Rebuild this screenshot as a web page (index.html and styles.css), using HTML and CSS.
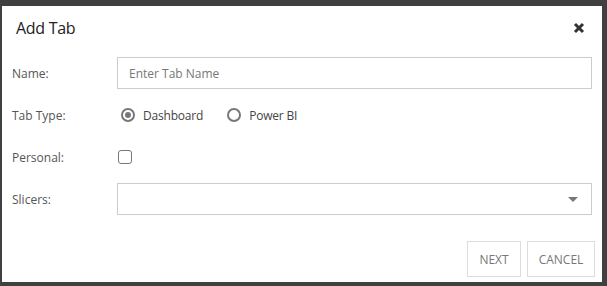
FILE: index.html
```html
<!DOCTYPE html>
<html>
<head>
<meta charset="utf-8">
<link rel="stylesheet" href="styles.css">
</head>
<body>
<div class="dialog">
  <div class="header">
    <span class="title">Add Tab</span>
    <svg class="close" width="12" height="12" viewBox="0 0 12 12"><path d="M2 2 L10 10 M10 2 L2 10" stroke="#333" stroke-width="3" stroke-linecap="butt"/></svg>
  </div>
  <div class="form">
    <div class="row">
      <label class="label">Name:</label>
      <div class="input"><span class="placeholder">Enter Tab Name</span></div>
    </div>
    <div class="row">
      <label class="label">Tab Type:</label>
      <div class="radios">
        <span class="radio-item"><span class="radio checked"></span>Dashboard</span>
        <span class="radio-item"><span class="radio"></span>Power BI</span>
      </div>
    </div>
    <div class="row">
      <label class="label">Personal:</label>
      <span class="checkbox"></span>
    </div>
    <div class="row">
      <label class="label">Slicers:</label>
      <div class="input select"><span class="caret"></span></div>
    </div>
  </div>
  <div class="footer">
    <button class="btn next">NEXT</button>
    <button class="btn">CANCEL</button>
  </div>
</div>
</body>
</html>
```
FILE: styles.css
```css
html, body {
  margin: 0;
  padding: 0;
  background: #404040;
  width: 607px;
  height: 286px;
  overflow: hidden;
}
body {
  padding: 6px 0 0 2px;
  box-sizing: border-box;
  font-family: "Open Sans", "Noto Sans", sans-serif;
}
.dialog {
  width: 600px;
  height: 276px;
  background: #fff;
  box-sizing: border-box;
  display: flex;
  flex-direction: column;
}
.header {
  height: 44px;
  display: flex;
  align-items: center;
  justify-content: space-between;
  padding: 0 17px 0 14px;
}
.title {
  font-size: 16px;
  color: #222;
  letter-spacing: -0.3px;
}
.close {
  display: block;
}
.form {
  padding: 2px 10px 0 10px;
  display: flex;
  flex-direction: column;
}
.row {
  display: flex;
  align-items: center;
  height: 42px;
}
.label {
  width: 105px;
  font-size: 12px;
  color: #555;
}
.input {
  width: 475px;
  height: 32px;
  box-sizing: border-box;
  border: 1px solid #ccc;
  display: flex;
  align-items: center;
  padding-left: 11px;
}
.placeholder {
  font-size: 12px;
  color: #777;
}
.radios {
  display: flex;
  align-items: center;
  font-size: 12px;
  color: #444;
  letter-spacing: -0.2px;
}
.radio-item {
  display: flex;
  align-items: center;
  margin-left: 4px;
  margin-right: 20px;
}
.radio {
  width: 14px;
  height: 14px;
  box-sizing: border-box;
  border: 2px solid #777;
  border-radius: 50%;
  margin-right: 8px;
  display: flex;
  align-items: center;
  justify-content: center;
}
.radio.checked::after {
  content: "";
  width: 6px;
  height: 6px;
  border-radius: 50%;
  background: #777;
}
.checkbox {
  width: 14px;
  height: 14px;
  box-sizing: border-box;
  border: 1px solid #777;
  border-radius: 3px;
  margin-left: 1px;
}
.select {
  justify-content: flex-end;
  padding-right: 13px;
}
.caret {
  width: 0;
  height: 0;
  border-left: 5px solid transparent;
  border-right: 5px solid transparent;
  border-top: 5px solid #777;
}
.footer {
  margin-top: auto;
  display: flex;
  justify-content: flex-end;
  gap: 6px;
  padding: 0 7px 5px 0;
}
.btn {
  height: 36px;
  background: #fff;
  border: 1px solid #ddd;
  font-family: inherit;
  font-size: 12px;
  color: #777;
  padding: 0;
}
.next {
  width: 54px;
}
.btn:last-child {
  width: 68px;
}
```
